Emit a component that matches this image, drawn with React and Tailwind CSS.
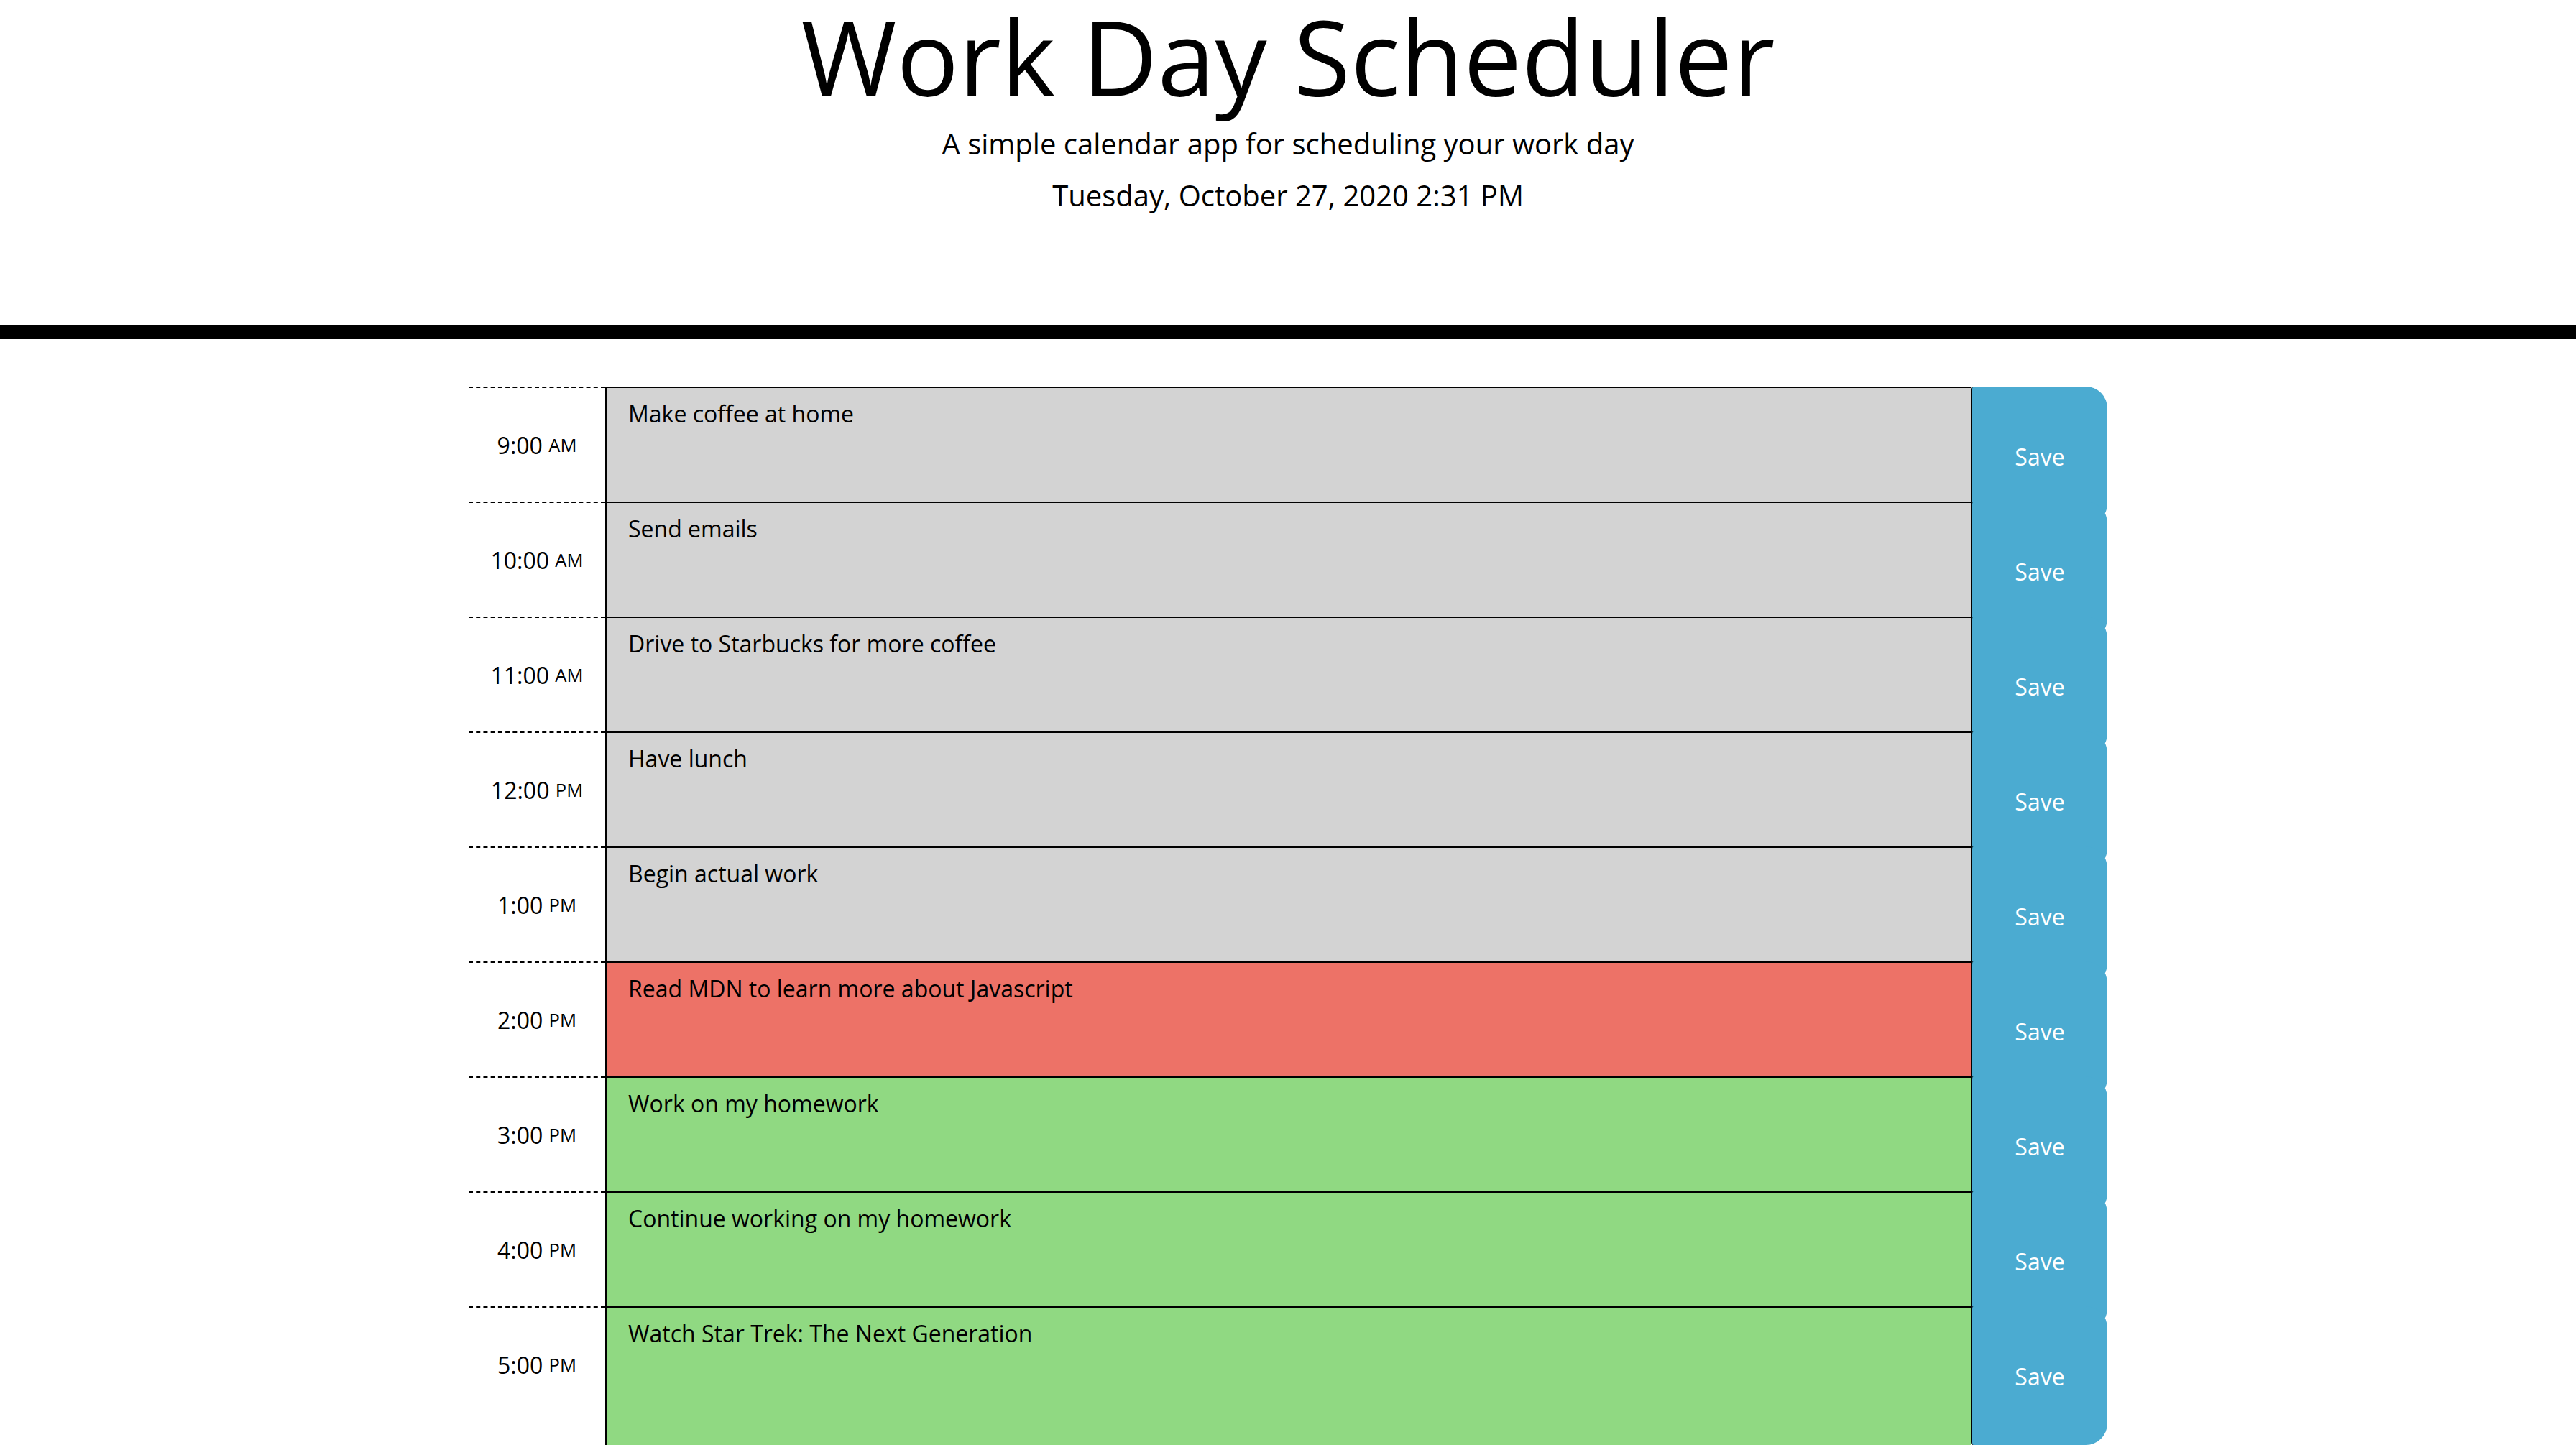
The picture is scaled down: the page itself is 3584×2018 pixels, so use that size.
import React from 'react';

const rows = [
  { hour: '9:00', period: 'AM', text: 'Make coffee at home', status: 'past' },
  { hour: '10:00', period: 'AM', text: 'Send emails', status: 'past' },
  { hour: '11:00', period: 'AM', text: 'Drive to Starbucks for more coffee', status: 'past' },
  { hour: '12:00', period: 'PM', text: 'Have lunch', status: 'past' },
  { hour: '1:00', period: 'PM', text: 'Begin actual work', status: 'past' },
  { hour: '2:00', period: 'PM', text: 'Read MDN to learn more about Javascript', status: 'present' },
  { hour: '3:00', period: 'PM', text: 'Work on my homework', status: 'future' },
  { hour: '4:00', period: 'PM', text: 'Continue working on my homework', status: 'future' },
  { hour: '5:00', period: 'PM', text: 'Watch Star Trek: The Next Generation', status: 'future' },
];

const statusColors = {
  past: 'bg-[#d3d3d3]',
  present: 'bg-[#ed7267]',
  future: 'bg-[#90d982]',
};

function TimeBlock({ hour, period, text, status }) {
  return (
    <div className="flex h-[160px]">
      {/* Hour label */}
      <div className="w-[190px] h-[160px] shrink-0 bg-white border-t-2 border-dashed border-black flex items-center justify-center pt-[2px] text-[32px] leading-none text-black">
        {hour}&nbsp;<span className="text-[25.6px]">{period}</span>
      </div>

      {/* Description */}
      <textarea
        defaultValue={text}
        readOnly
        className={`w-[1900px] h-[193px] shrink-0 resize-none outline-none border-t-2 border-l-2 border-black pt-[20px] px-[30px] text-[32px] leading-none text-black ${statusColors[status]}`}
      />

      {/* Save button */}
      <button className="w-[190px] h-[193px] shrink-0 bg-[#4babd1] border-l-2 border-black rounded-l-[4px] rounded-r-[30px] pt-[2px] text-white text-[32px] leading-none">
        Save
      </button>
    </div>
  );
}

export default function App() {
  return (
    <div className="min-h-screen bg-white overflow-hidden font-['Open_Sans',sans-serif] text-black">
      <header className="text-center pb-[128px] border-b-[20px] border-black mb-[66px]">
        <h1 className="text-[144px] leading-[156px] font-normal mb-[24px]">Work Day Scheduler</h1>
        <p className="text-[40px] leading-none mb-[32px]">A simple calendar app for scheduling your work day</p>
        <p className="text-[40px] leading-none mb-[32px]">Tuesday, October 27, 2020 2:31 PM</p>
      </header>

      <div className="w-[2280px] mx-auto">
        {rows.map((row) => (
          <TimeBlock key={row.hour} {...row} />
        ))}
      </div>
    </div>
  );
}
